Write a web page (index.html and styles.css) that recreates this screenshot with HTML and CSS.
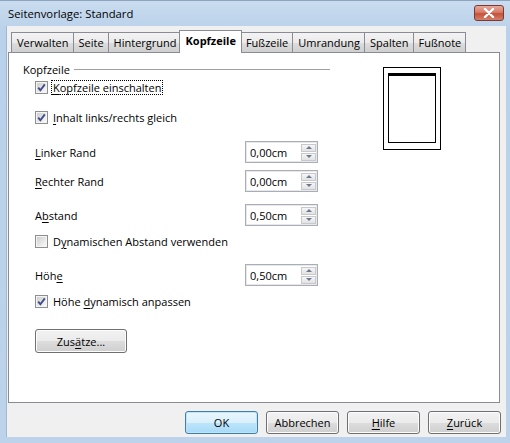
FILE: index.html
```html
<!DOCTYPE html>
<html lang="de">
<head>
  <meta charset="UTF-8">
  <title>Seitenvorlage: Standard</title>
  <link rel="stylesheet" href="styles.css">
</head>
<body>
  <div class="window">
    <div class="titlebar">
      <span class="title">Seitenvorlage: Standard</span>
      <span class="close">
        <svg width="12" height="10" viewBox="0 0 12 10"><path d="M2 1 L10 9 M10 1 L2 9" stroke="#fff" stroke-width="2.4" stroke-linecap="round"/></svg>
      </span>
    </div>
    <div class="client">
      <div class="tabs">
        <div class="tab">Verwalten</div>
        <div class="tab">Seite</div>
        <div class="tab">Hintergrund</div>
        <div class="tab active">Kopfzeile</div>
        <div class="tab">Fußzeile</div>
        <div class="tab">Umrandung</div>
        <div class="tab">Spalten</div>
        <div class="tab">Fußnote</div>
      </div>
      <div class="panel">
        <div class="form">
          <div class="group-head"><span>Kopfzeile</span><span class="rule"></span></div>

          <div class="check row-cb1">
            <span class="box on"></span>
            <span class="focus"><u>K</u>opfzeile einschalten</span>
          </div>
          <div class="check row-cb2">
            <span class="box on"></span>
            <span class="text"><u>I</u>nhalt links/rechts gleich</span>
          </div>

          <div class="field row-s1">
            <span class="lbl"><u>L</u>inker Rand</span>
            <div class="spin"><span class="val">0,00cm</span><span class="arrows"><span class="up"></span><span class="down"></span></span></div>
          </div>
          <div class="field row-s2">
            <span class="lbl"><u>R</u>echter Rand</span>
            <div class="spin"><span class="val">0,00cm</span><span class="arrows"><span class="up"></span><span class="down"></span></span></div>
          </div>
          <div class="field row-s3">
            <span class="lbl">A<u>b</u>stand</span>
            <div class="spin"><span class="val">0,50cm</span><span class="arrows"><span class="up"></span><span class="down"></span></span></div>
          </div>
          <div class="check row-cb3">
            <span class="box"></span>
            <span class="text">D<u>y</u>namischen Abstand verwenden</span>
          </div>
          <div class="field row-s4">
            <span class="lbl">Höh<u>e</u></span>
            <div class="spin"><span class="val">0,50cm</span><span class="arrows"><span class="up"></span><span class="down"></span></span></div>
          </div>
          <div class="check row-cb4">
            <span class="box on"></span>
            <span class="text">Höhe <u>d</u>ynamisch anpassen</span>
          </div>
          <div class="row-btn">
            <button class="btn extra">Zus<u>ä</u>tze...</button>
          </div>
        </div>
        <div class="preview"><div class="page"></div></div>
      </div>
      <div class="buttons">
        <button class="btn default">OK</button>
        <button class="btn">Abbrechen</button>
        <button class="btn"><u>H</u>ilfe</button>
        <button class="btn"><u>Z</u>urück</button>
      </div>
    </div>
  </div>
</body>
</html>
```

FILE: styles.css
```css
body {
  margin: 0;
  padding: 0;
  font-family: 'Open Sans', 'Noto Sans', sans-serif;
  font-size: 11px;
  color: #000;
  background: #fff;
}
u {
  text-decoration: underline;
  text-underline-offset: 2px;
}
.window {
  width: 510px;
  height: 443px;
  box-sizing: border-box;
  background: linear-gradient(#cadcef, #b9d1ea 30px, #bcd3eb);
  border-top: 1px solid #8da4bd;
  display: flex;
  flex-direction: column;
}
.titlebar {
  height: 25px;
  display: flex;
  align-items: flex-start;
  justify-content: space-between;
  padding: 0 6px 0 8px;
}
.title {
  margin-top: 5px;
  font-size: 11.3px;
}
.close {
  margin-top: 4px;
  width: 30px;
  height: 16px;
  box-sizing: border-box;
  border: 1px solid #7b3a30;
  border-radius: 3px;
  background: linear-gradient(#e6aa9d, #d77b68 45%, #c4513b 55%, #d5806a);
  display: flex;
  align-items: center;
  justify-content: center;
}
.client {
  margin: 0 4px 0 6px;
  height: 411px;
  background: #f0f0f0;
  border-left: 1px solid #a4b8cc;
  box-sizing: border-box;
  display: flex;
  flex-direction: column;
}
.tabs {
  display: flex;
  align-items: flex-end;
  height: 22px;
  margin-top: 4px;
  padding-left: 4px;
}
.tab {
  height: 20px;
  box-sizing: border-box;
  padding: 2px 4px 0 5px;
  border: 1px solid #898c95;
  border-bottom: none;
  margin-left: -1px;
  background: linear-gradient(#f3f3f3, #ebebeb 50%, #dddddd 51%, #cfcfcf);
  white-space: nowrap;
}
.tab:first-child {
  margin-left: 0;
}
.tab.active {
  height: 23px;
  margin: 0 -2px -1px -3px;
  padding: 2px 5px 0 6px;
  background: #fff;
  font-weight: bold;
  position: relative;
  z-index: 1;
}
.tab.active + .tab {
  margin-left: 0;
}
.panel {
  margin-left: 1px;
  width: 492px;
  height: 351px;
  box-sizing: border-box;
  border: 1px solid #898c95;
  background: #fff;
  display: flex;
  align-items: flex-start;
}
.form {
  width: 307px;
  padding: 8px 0 0 14px;
  display: flex;
  flex-direction: column;
}
.group-head {
  height: 16px;
  display: flex;
  align-items: center;
  gap: 4px;
}
.group-head .rule {
  flex: 1;
  height: 1px;
  background: #a0a0a0;
}
.check {
  height: 15px;
  display: flex;
  align-items: center;
  margin-left: 12px;
  gap: 3px;
}
.box {
  width: 13px;
  height: 13px;
  box-sizing: border-box;
  border: 1px solid #8e8f8f;
  background: linear-gradient(135deg, #c9c9c9, #efefef 70%, #fbfbfb);
  box-shadow: inset 0 0 0 1px #f4f4f4;
  flex: none;
}
.box.on {
  background-image: url("data:image/svg+xml,%3Csvg xmlns='http://www.w3.org/2000/svg' width='11' height='11'%3E%3Cpath d='M2.2 5.6 L4.4 8.2 L8.8 2.4' fill='none' stroke='%23404d8a' stroke-width='1.9'/%3E%3C/svg%3E"), linear-gradient(135deg, #c9c9c9, #efefef 70%, #fbfbfb);
}
.check .text, .check .focus {
  padding: 0 1px;
  border: 1px dotted transparent;
  line-height: 13px;
}
.check .focus {
  border-color: #000;
}
.field {
  height: 22px;
  display: flex;
  align-items: center;
  margin-left: 12px;
}
.lbl {
  width: 210px;
  flex: none;
}
.spin {
  width: 73px;
  height: 22px;
  box-sizing: border-box;
  border: 1px solid #abadb3;
  box-shadow: inset 0 0 0 1px #e3e9ef;
  display: flex;
  align-items: center;
  justify-content: space-between;
  padding: 0 1px 0 4px;
  background: #fff;
}
.arrows {
  display: flex;
  flex-direction: column;
  gap: 1px;
}
.up, .down {
  width: 15px;
  height: 8px;
  box-sizing: border-box;
  border: 1px solid #c7c9cc;
  background: linear-gradient(#f6f6f6, #e2e2e2);
  display: flex;
  align-items: center;
  justify-content: center;
}
.up::after, .down::after {
  content: "";
  border-left: 3px solid transparent;
  border-right: 3px solid transparent;
}
.up::after {
  border-bottom: 3px solid #6b7a90;
}
.down::after {
  border-top: 3px solid #6b7a90;
}
.row-cb1 { margin-top: 3px; }
.row-cb2 { margin-top: 15px; }
.row-s1 { margin-top: 16px; }
.row-s2 { margin-top: 7px; }
.row-s3 { margin-top: 12px; }
.row-cb3 { margin-top: 8px; }
.row-s4 { margin-top: 15px; }
.row-cb4 { margin-top: 8px; }
.row-btn {
  margin-top: 20px;
  margin-left: 12px;
}
.btn {
  height: 24px;
  box-sizing: border-box;
  border: 1px solid #707070;
  border-radius: 3px;
  background: linear-gradient(#f2f2f2, #ebebeb 50%, #dddddd 51%, #cfcfcf);
  box-shadow: inset 0 0 0 1px #fcfcfc;
  font-family: inherit;
  font-size: 11px;
  color: #000;
  padding: 0;
}
.extra {
  width: 92px;
}
.preview {
  margin: 14px 0 0 53px;
  width: 58px;
  height: 83px;
  box-sizing: border-box;
  border: 1px solid #000;
  padding: 5px 4px 6px 4px;
}
.page {
  height: 100%;
  box-sizing: border-box;
  border: 1px solid #000;
  border-top-width: 3px;
}
.buttons {
  display: flex;
  justify-content: flex-end;
  gap: 8px;
  margin-top: 8px;
  padding-right: 5px;
}
.buttons .btn {
  width: 73px;
  height: 23px;
}
.btn.default {
  border-color: #3c7fb1;
  box-shadow: inset 0 0 0 1px #c4e4f6;
  background: linear-gradient(#eaf6fd, #d9f0fc 50%, #bee6fd 51%, #a7d9f5);
}
```
